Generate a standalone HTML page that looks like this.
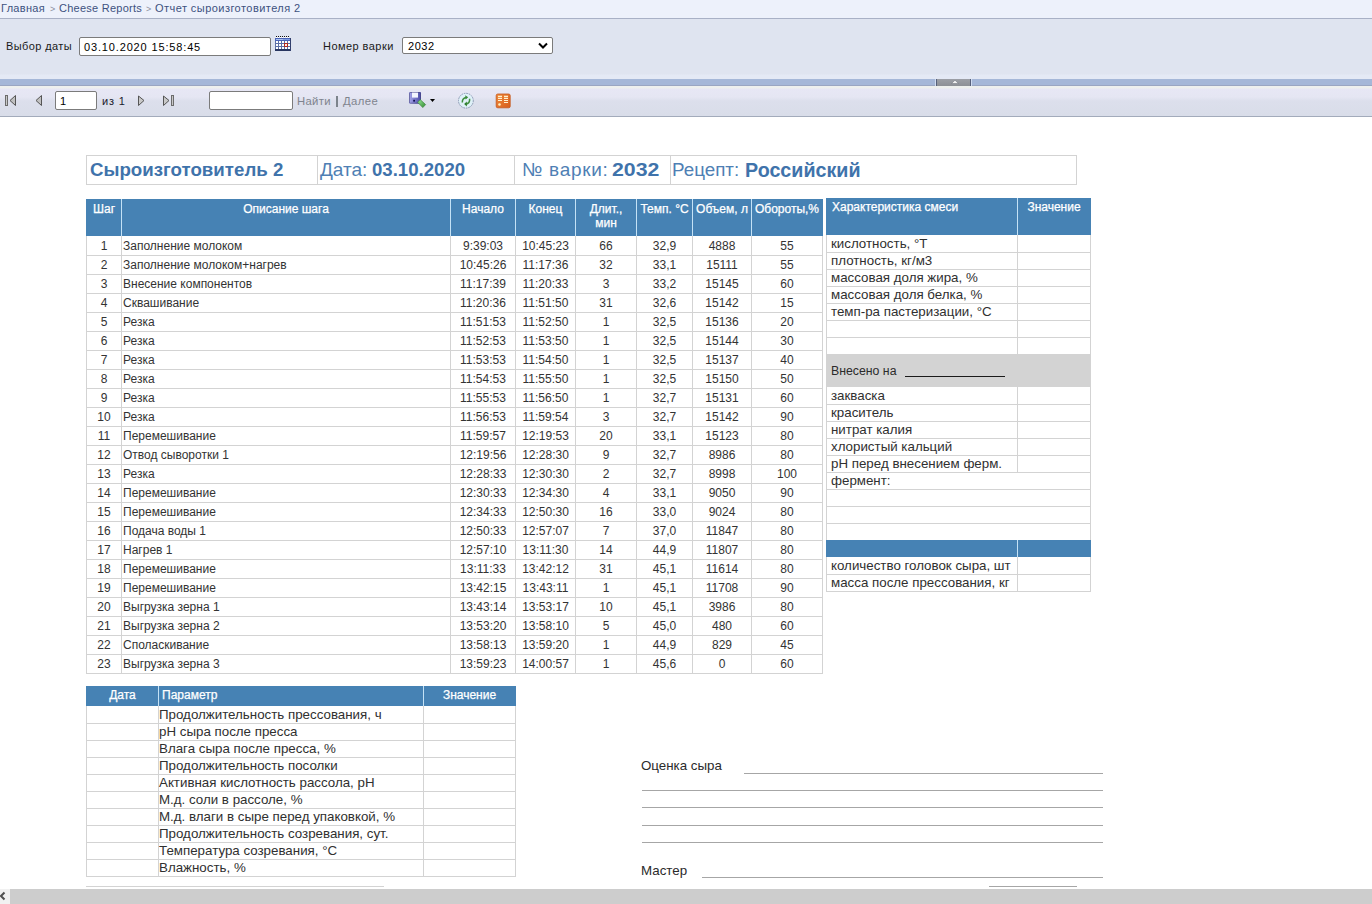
<!DOCTYPE html>
<html><head><meta charset="utf-8"><title>Отчет сыроизготовителя 2</title><style>
*{margin:0;padding:0;box-sizing:border-box}
html,body{width:1372px;height:904px;overflow:hidden;background:#fff;font-family:"Liberation Sans",sans-serif}
body{position:relative}
.a{position:absolute}
.t{position:absolute;white-space:nowrap}
#crumb{left:0;top:0;width:1372px;height:19px;background:#edf1fb;border-bottom:1px solid #a9b1c6}
#params{left:0;top:19px;width:1372px;height:60px;background:linear-gradient(#dfe4f0 0,#dfe4f0 55px,#e4e9f5 56px,#e4e9f5 60px)}
.lbl{font-size:11px;line-height:13px;color:#1a1a1a}
.inp{position:absolute;background:#fff;border:1px solid #7b7b7b;border-radius:2px;font-size:12px;color:#000;white-space:nowrap;padding-left:4px}
#split{left:0;top:79px;width:1372px;height:7px;background:#a5b7d8;border-bottom:1px solid #9aa6c2}
#tb{left:0;top:86px;width:1372px;height:31px;background:linear-gradient(#eef0ee 0px,#eef0ee 2px,#e7e7f5 3px,#e5e6f3 11px,#dcdfec 15px,#d9dde9 29px);border-bottom:1px solid #a3abbb}
.hl{position:absolute;height:1px;background:#d3d3d3}
.vl{position:absolute;width:1px;background:#d3d3d3}
.blue{position:absolute;background:#4682b4}
.hv{position:absolute;width:1px;background:#c4e2f6}
.wt{-webkit-text-stroke:0.25px #fff}
.c{position:absolute;white-space:nowrap;font-size:12px;color:#333;line-height:19px;height:19px;padding-top:1px}
.h{position:absolute;white-space:nowrap;font-size:12px;color:#fff;line-height:13.5px;text-align:center;-webkit-text-stroke:0.25px #fff}
.r{position:absolute;white-space:nowrap;font-size:13.33px;color:#303030;line-height:17px;height:17px}
.sig{position:absolute;height:1px;background:#a6a6a6}
</style></head><body>
<div id="crumb" class="a"><span class="t" style="left:1px;top:2px;font-size:11px;letter-spacing:0.3px;color:#3d5180">Главная</span><span class="t" style="left:50px;top:4px;font-size:9px;color:#8a8f9c">&gt;</span><span class="t" style="left:59px;top:2px;font-size:11px;letter-spacing:0.25px;color:#3d5180">Cheese Reports</span><span class="t" style="left:146px;top:4px;font-size:9px;color:#8a8f9c">&gt;</span><span class="t" style="left:155px;top:2px;font-size:11px;letter-spacing:0.45px;color:#3d5180">Отчет сыроизготовителя 2</span></div>
<div id="params" class="a"><div class="t lbl" style="left:6px;top:21px;letter-spacing:0.39px">Выбор даты</div><div class="inp" style="left:79px;top:18px;width:192px;height:19px;line-height:19px;letter-spacing:0.85px;font-size:11px">03.10.2020 15:58:45</div><svg class="a" style="left:275px;top:17px" width="16" height="16" viewBox="0 0 16 16" shape-rendering="crispEdges"><rect x="0" y="2" width="16" height="13" fill="#5b6ea6"/><rect x="0" y="2" width="16" height="3" fill="#4a64b8"/><rect x="1" y="3" width="7" height="1" fill="#a8c0f0"/><rect x="8" y="3" width="7" height="1" fill="#7f9ce0"/><rect x="0" y="13" width="16" height="2" fill="#283560"/><rect x="15" y="2" width="1" height="13" fill="#33406e"/><rect x="1" y="0" width="1" height="1" fill="#111"/><rect x="1" y="1" width="1" height="1" fill="#fff"/><rect x="3" y="0" width="1" height="1" fill="#111"/><rect x="3" y="1" width="1" height="1" fill="#fff"/><rect x="5" y="0" width="1" height="1" fill="#111"/><rect x="5" y="1" width="1" height="1" fill="#fff"/><rect x="7" y="0" width="1" height="1" fill="#111"/><rect x="7" y="1" width="1" height="1" fill="#fff"/><rect x="9" y="0" width="1" height="1" fill="#111"/><rect x="9" y="1" width="1" height="1" fill="#fff"/><rect x="11" y="0" width="1" height="1" fill="#111"/><rect x="11" y="1" width="1" height="1" fill="#fff"/><rect x="13" y="0" width="1" height="1" fill="#111"/><rect x="13" y="1" width="1" height="1" fill="#fff"/><rect x="1" y="5" width="2" height="2" fill="#fff"/><rect x="1" y="8" width="2" height="2" fill="#fff"/><rect x="1" y="11" width="2" height="2" fill="#fff"/><rect x="4" y="5" width="2" height="2" fill="#fff"/><rect x="4" y="8" width="2" height="2" fill="#fff"/><rect x="4" y="11" width="2" height="2" fill="#fff"/><rect x="7" y="5" width="2" height="2" fill="#fff"/><rect x="7" y="8" width="2" height="2" fill="#fff"/><rect x="7" y="11" width="2" height="2" fill="#fff"/><rect x="10" y="5" width="2" height="2" fill="#fff"/><rect x="10" y="8" width="2" height="2" fill="#fff"/><rect x="10" y="11" width="2" height="2" fill="#fff"/><rect x="13" y="5" width="2" height="2" fill="#fff"/><rect x="13" y="8" width="2" height="2" fill="#fff"/><rect x="13" y="11" width="2" height="2" fill="#fff"/><rect x="9" y="7" width="4" height="4" fill="#b02a20"/><rect x="10" y="8" width="2" height="2" fill="#fde8e0"/></svg><div class="t lbl" style="left:323px;top:21px;letter-spacing:0.45px">Номер варки</div><div class="inp" style="left:402px;top:18px;width:151px;height:17px;line-height:17px;padding-left:5px;font-size:11px;letter-spacing:0.55px">2032<svg class="a" style="left:135px;top:4px" width="10" height="7" viewBox="0 0 10 7"><path d="M1 1.5L5 5.5L9 1.5" stroke="#000" stroke-width="2" fill="none"/></svg></div></div>
<div id="split" class="a"><div class="a" style="left:935px;top:0;width:1px;height:7px;background:#d0dcf0"></div><div class="a" style="left:936px;top:0;width:35px;height:7px;background:linear-gradient(#9c9fa6,#8d9096);border-left:1px solid #56607a;border-right:1px solid #56607a"></div><div class="a" style="left:971px;top:0;width:1px;height:7px;background:#d0dcf0"></div><svg class="a" style="left:950px;top:0px" width="10" height="6" viewBox="0 0 10 6"><path d="M1.5 4.5L5 1.2L8.5 4.5Z" fill="#f2f2f2" stroke="#6a6e78" stroke-width="0.5"/></svg></div>
<div id="tb" class="a"><svg class="a" style="left:0;top:0" width="200" height="30" viewBox="0 0 200 30"><rect x="5.5" y="9.5" width="2" height="10" fill="#c8c8c8" stroke="#6c6c6c"/><path d="M15.5 9.5V19.5L10 14.5Z" fill="#c0c0c0" stroke="#555" stroke-linejoin="round"/><path d="M41.5 9.5V19.5L36 14.5Z" fill="#c0c0c0" stroke="#555" stroke-linejoin="round"/><path d="M138.5 10V19.5L144 14.5Z" fill="#c8c8c8" stroke="#555" stroke-linejoin="round"/><path d="M163.5 10V19.5L169 14.5Z" fill="#c8c8c8" stroke="#555" stroke-linejoin="round"/><rect x="171.5" y="9.5" width="2" height="10" fill="#c8c8c8" stroke="#6c6c6c"/></svg><div class="inp" style="left:55px;top:5px;width:42px;height:19px;line-height:19px;font-size:11px">1</div><div class="t" style="left:102px;top:9px;font-size:11px;letter-spacing:0.8px;color:#1a1a2e">из 1</div><div class="inp" style="left:209px;top:5px;width:84px;height:19px"></div><div class="t" style="left:297px;top:9px;font-size:11.3px;color:#7f848e;letter-spacing:0.3px">Найти</div><div class="a" style="left:336px;top:10px;width:2px;height:11px;background:#7d848c"></div><div class="t" style="left:343px;top:9px;font-size:11.3px;color:#7f848e;letter-spacing:0.4px">Далее</div><svg class="a" style="left:405px;top:4px" width="34" height="22" viewBox="0 0 34 22"><defs><linearGradient id="fl" x1="0" x2="1"><stop offset="0" stop-color="#a8a8ec"/><stop offset="1" stop-color="#4a4aa6"/></linearGradient><linearGradient id="ar" x1="0" y1="0" x2="1" y2="1"><stop offset="0" stop-color="#9ce89c"/><stop offset="1" stop-color="#2e8a2e"/></linearGradient></defs><rect x="4" y="2" width="12" height="11.7" rx="1" fill="url(#fl)"/><rect x="4.5" y="2.5" width="11" height="10.7" rx="0.8" fill="none" stroke="#45457a" stroke-width="0.8" opacity="0.7"/><rect x="7" y="2.6" width="6" height="5" fill="#f4f6ff"/><rect x="8.2" y="9.8" width="1.8" height="1.8" fill="#101050"/><path d="M12.6 12.2L15.2 9.6L20.6 14.6L17.8 17.6Z" fill="url(#ar)" stroke="#2f7a2f" stroke-width="0.6"/><path d="M25 9H30L27.5 12Z" fill="#000"/></svg><svg class="a" style="left:457px;top:6px" width="18" height="18" viewBox="0 0 18 18"><circle cx="8.9" cy="8.7" r="7.4" fill="#dff1f8" stroke="#7c8aa8" stroke-width="0.9" stroke-dasharray="1.6 0.9"/><path d="M5.3 10.5C5.2 7.6 7 5.8 9.5 5.5" stroke="#3f8f3f" stroke-width="1.5" fill="none"/><path d="M8.2 3.2L11.2 5.3L8.6 7.6Z" fill="#3a8a3a"/><path d="M12.6 6.8C12.9 9.8 11.2 11.8 8.8 12.2" stroke="#3f8f3f" stroke-width="1.5" fill="none"/><path d="M9.8 9.6L7.1 12.1L9.9 14.6Z" fill="#2f7f2f"/></svg><svg class="a" style="left:495px;top:7px" width="17" height="16" viewBox="0 0 17 16"><defs><linearGradient id="og" x1="0" y1="0" x2="1" y2="1"><stop offset="0" stop-color="#f08a3a"/><stop offset="1" stop-color="#d85e1c"/></linearGradient></defs><rect x="1.2" y="1" width="14" height="13.8" rx="1.6" fill="url(#og)" stroke="#c4551a" stroke-width="0.8"/><path d="M3 3.4H7M3 5.4H7M3 7.5H7M9 3.4H13M9 5.4H13M9 7.5H13M9 9.5H13" stroke="#fff2d0" stroke-width="1.1"/><circle cx="4.5" cy="11.5" r="1.3" fill="#fff2c0"/></svg></div>
<div class="a" style="left:86px;top:155px;width:991px;height:30px;border:1px solid #d3d3d3"></div><div class="vl" style="left:317px;top:155px;height:30px"></div><div class="vl" style="left:514px;top:155px;height:30px"></div><div class="vl" style="left:670px;top:155px;height:30px"></div><div class="t" style="left:90px;top:159px;font-size:18.7px;line-height:22px;font-weight:bold;letter-spacing:0px;color:#3f73ab">Сыроизготовитель 2</div><div class="t" style="left:320px;top:159px;font-size:19px;line-height:22px;font-weight:normal;letter-spacing:0px;color:#4f7fb4">Дата:</div><div class="t" style="left:372px;top:159px;font-size:18.6px;line-height:22px;font-weight:bold;letter-spacing:0px;color:#3f73ab">03.10.2020</div><div class="t" style="left:522px;top:159px;font-size:19px;line-height:22px;font-weight:normal;letter-spacing:0.7px;color:#4f7fb4">№ варки:</div><div class="t" style="left:612px;top:159px;font-size:19px;line-height:22px;font-weight:bold;letter-spacing:0px;color:#3f73ab;transform:scaleX(1.12);transform-origin:0 0">2032</div><div class="t" style="left:672px;top:159px;font-size:18.8px;line-height:22px;font-weight:normal;letter-spacing:0px;color:#4f7fb4">Рецепт:</div><div class="t" style="left:745px;top:159px;font-size:19.7px;line-height:22px;font-weight:bold;letter-spacing:0px;color:#3f73ab">Российский</div><div class="blue" style="left:86px;top:199px;width:737px;height:37px"></div><div class="hv" style="left:121px;top:199px;height:37px"></div><div class="hv" style="left:450px;top:199px;height:37px"></div><div class="hv" style="left:515px;top:199px;height:37px"></div><div class="hv" style="left:575px;top:199px;height:37px"></div><div class="hv" style="left:636px;top:199px;height:37px"></div><div class="hv" style="left:692px;top:199px;height:37px"></div><div class="hv" style="left:751px;top:199px;height:37px"></div><div class="vl" style="left:86px;top:236px;height:438px"></div><div class="vl" style="left:121px;top:236px;height:438px"></div><div class="vl" style="left:450px;top:236px;height:438px"></div><div class="vl" style="left:515px;top:236px;height:438px"></div><div class="vl" style="left:575px;top:236px;height:438px"></div><div class="vl" style="left:636px;top:236px;height:438px"></div><div class="vl" style="left:692px;top:236px;height:438px"></div><div class="vl" style="left:751px;top:236px;height:438px"></div><div class="vl" style="left:822px;top:236px;height:438px"></div><div class="hl" style="left:86px;top:255px;width:737px"></div><div class="hl" style="left:86px;top:274px;width:737px"></div><div class="hl" style="left:86px;top:293px;width:737px"></div><div class="hl" style="left:86px;top:312px;width:737px"></div><div class="hl" style="left:86px;top:331px;width:737px"></div><div class="hl" style="left:86px;top:350px;width:737px"></div><div class="hl" style="left:86px;top:369px;width:737px"></div><div class="hl" style="left:86px;top:388px;width:737px"></div><div class="hl" style="left:86px;top:407px;width:737px"></div><div class="hl" style="left:86px;top:426px;width:737px"></div><div class="hl" style="left:86px;top:445px;width:737px"></div><div class="hl" style="left:86px;top:464px;width:737px"></div><div class="hl" style="left:86px;top:483px;width:737px"></div><div class="hl" style="left:86px;top:502px;width:737px"></div><div class="hl" style="left:86px;top:521px;width:737px"></div><div class="hl" style="left:86px;top:540px;width:737px"></div><div class="hl" style="left:86px;top:559px;width:737px"></div><div class="hl" style="left:86px;top:578px;width:737px"></div><div class="hl" style="left:86px;top:597px;width:737px"></div><div class="hl" style="left:86px;top:616px;width:737px"></div><div class="hl" style="left:86px;top:635px;width:737px"></div><div class="hl" style="left:86px;top:654px;width:737px"></div><div class="hl" style="left:86px;top:673px;width:737px"></div><div class="h" style="left:87px;top:203px;width:34px">Шаг</div><div class="h" style="left:122px;top:203px;width:328px">Описание шага</div><div class="h" style="left:451px;top:203px;width:64px">Начало</div><div class="h" style="left:516px;top:203px;width:59px">Конец</div><div class="h" style="left:576px;top:203px;width:60px">Длит.,<br>мин</div><div class="h" style="left:637px;top:203px;width:55px">Темп. °C</div><div class="h" style="left:693px;top:203px;width:58px">Объем, л</div><div class="h" style="left:752px;top:203px;width:70px">Обороты,%</div><div class="c" style="left:87px;top:236px;width:34px;text-align:center">1</div><div class="c" style="left:123px;top:236px">Заполнение молоком</div><div class="c" style="left:451px;top:236px;width:64px;text-align:center">9:39:03</div><div class="c" style="left:516px;top:236px;width:59px;text-align:center">10:45:23</div><div class="c" style="left:576px;top:236px;width:60px;text-align:center">66</div><div class="c" style="left:637px;top:236px;width:55px;text-align:center">32,9</div><div class="c" style="left:693px;top:236px;width:58px;text-align:center">4888</div><div class="c" style="left:752px;top:236px;width:70px;text-align:center">55</div><div class="c" style="left:87px;top:255px;width:34px;text-align:center">2</div><div class="c" style="left:123px;top:255px">Заполнение молоком+нагрев</div><div class="c" style="left:451px;top:255px;width:64px;text-align:center">10:45:26</div><div class="c" style="left:516px;top:255px;width:59px;text-align:center">11:17:36</div><div class="c" style="left:576px;top:255px;width:60px;text-align:center">32</div><div class="c" style="left:637px;top:255px;width:55px;text-align:center">33,1</div><div class="c" style="left:693px;top:255px;width:58px;text-align:center">15111</div><div class="c" style="left:752px;top:255px;width:70px;text-align:center">55</div><div class="c" style="left:87px;top:274px;width:34px;text-align:center">3</div><div class="c" style="left:123px;top:274px">Внесение компонентов</div><div class="c" style="left:451px;top:274px;width:64px;text-align:center">11:17:39</div><div class="c" style="left:516px;top:274px;width:59px;text-align:center">11:20:33</div><div class="c" style="left:576px;top:274px;width:60px;text-align:center">3</div><div class="c" style="left:637px;top:274px;width:55px;text-align:center">33,2</div><div class="c" style="left:693px;top:274px;width:58px;text-align:center">15145</div><div class="c" style="left:752px;top:274px;width:70px;text-align:center">60</div><div class="c" style="left:87px;top:293px;width:34px;text-align:center">4</div><div class="c" style="left:123px;top:293px">Сквашивание</div><div class="c" style="left:451px;top:293px;width:64px;text-align:center">11:20:36</div><div class="c" style="left:516px;top:293px;width:59px;text-align:center">11:51:50</div><div class="c" style="left:576px;top:293px;width:60px;text-align:center">31</div><div class="c" style="left:637px;top:293px;width:55px;text-align:center">32,6</div><div class="c" style="left:693px;top:293px;width:58px;text-align:center">15142</div><div class="c" style="left:752px;top:293px;width:70px;text-align:center">15</div><div class="c" style="left:87px;top:312px;width:34px;text-align:center">5</div><div class="c" style="left:123px;top:312px">Резка</div><div class="c" style="left:451px;top:312px;width:64px;text-align:center">11:51:53</div><div class="c" style="left:516px;top:312px;width:59px;text-align:center">11:52:50</div><div class="c" style="left:576px;top:312px;width:60px;text-align:center">1</div><div class="c" style="left:637px;top:312px;width:55px;text-align:center">32,5</div><div class="c" style="left:693px;top:312px;width:58px;text-align:center">15136</div><div class="c" style="left:752px;top:312px;width:70px;text-align:center">20</div><div class="c" style="left:87px;top:331px;width:34px;text-align:center">6</div><div class="c" style="left:123px;top:331px">Резка</div><div class="c" style="left:451px;top:331px;width:64px;text-align:center">11:52:53</div><div class="c" style="left:516px;top:331px;width:59px;text-align:center">11:53:50</div><div class="c" style="left:576px;top:331px;width:60px;text-align:center">1</div><div class="c" style="left:637px;top:331px;width:55px;text-align:center">32,5</div><div class="c" style="left:693px;top:331px;width:58px;text-align:center">15144</div><div class="c" style="left:752px;top:331px;width:70px;text-align:center">30</div><div class="c" style="left:87px;top:350px;width:34px;text-align:center">7</div><div class="c" style="left:123px;top:350px">Резка</div><div class="c" style="left:451px;top:350px;width:64px;text-align:center">11:53:53</div><div class="c" style="left:516px;top:350px;width:59px;text-align:center">11:54:50</div><div class="c" style="left:576px;top:350px;width:60px;text-align:center">1</div><div class="c" style="left:637px;top:350px;width:55px;text-align:center">32,5</div><div class="c" style="left:693px;top:350px;width:58px;text-align:center">15137</div><div class="c" style="left:752px;top:350px;width:70px;text-align:center">40</div><div class="c" style="left:87px;top:369px;width:34px;text-align:center">8</div><div class="c" style="left:123px;top:369px">Резка</div><div class="c" style="left:451px;top:369px;width:64px;text-align:center">11:54:53</div><div class="c" style="left:516px;top:369px;width:59px;text-align:center">11:55:50</div><div class="c" style="left:576px;top:369px;width:60px;text-align:center">1</div><div class="c" style="left:637px;top:369px;width:55px;text-align:center">32,5</div><div class="c" style="left:693px;top:369px;width:58px;text-align:center">15150</div><div class="c" style="left:752px;top:369px;width:70px;text-align:center">50</div><div class="c" style="left:87px;top:388px;width:34px;text-align:center">9</div><div class="c" style="left:123px;top:388px">Резка</div><div class="c" style="left:451px;top:388px;width:64px;text-align:center">11:55:53</div><div class="c" style="left:516px;top:388px;width:59px;text-align:center">11:56:50</div><div class="c" style="left:576px;top:388px;width:60px;text-align:center">1</div><div class="c" style="left:637px;top:388px;width:55px;text-align:center">32,7</div><div class="c" style="left:693px;top:388px;width:58px;text-align:center">15131</div><div class="c" style="left:752px;top:388px;width:70px;text-align:center">60</div><div class="c" style="left:87px;top:407px;width:34px;text-align:center">10</div><div class="c" style="left:123px;top:407px">Резка</div><div class="c" style="left:451px;top:407px;width:64px;text-align:center">11:56:53</div><div class="c" style="left:516px;top:407px;width:59px;text-align:center">11:59:54</div><div class="c" style="left:576px;top:407px;width:60px;text-align:center">3</div><div class="c" style="left:637px;top:407px;width:55px;text-align:center">32,7</div><div class="c" style="left:693px;top:407px;width:58px;text-align:center">15142</div><div class="c" style="left:752px;top:407px;width:70px;text-align:center">90</div><div class="c" style="left:87px;top:426px;width:34px;text-align:center">11</div><div class="c" style="left:123px;top:426px">Перемешивание</div><div class="c" style="left:451px;top:426px;width:64px;text-align:center">11:59:57</div><div class="c" style="left:516px;top:426px;width:59px;text-align:center">12:19:53</div><div class="c" style="left:576px;top:426px;width:60px;text-align:center">20</div><div class="c" style="left:637px;top:426px;width:55px;text-align:center">33,1</div><div class="c" style="left:693px;top:426px;width:58px;text-align:center">15123</div><div class="c" style="left:752px;top:426px;width:70px;text-align:center">80</div><div class="c" style="left:87px;top:445px;width:34px;text-align:center">12</div><div class="c" style="left:123px;top:445px">Отвод сыворотки 1</div><div class="c" style="left:451px;top:445px;width:64px;text-align:center">12:19:56</div><div class="c" style="left:516px;top:445px;width:59px;text-align:center">12:28:30</div><div class="c" style="left:576px;top:445px;width:60px;text-align:center">9</div><div class="c" style="left:637px;top:445px;width:55px;text-align:center">32,7</div><div class="c" style="left:693px;top:445px;width:58px;text-align:center">8986</div><div class="c" style="left:752px;top:445px;width:70px;text-align:center">80</div><div class="c" style="left:87px;top:464px;width:34px;text-align:center">13</div><div class="c" style="left:123px;top:464px">Резка</div><div class="c" style="left:451px;top:464px;width:64px;text-align:center">12:28:33</div><div class="c" style="left:516px;top:464px;width:59px;text-align:center">12:30:30</div><div class="c" style="left:576px;top:464px;width:60px;text-align:center">2</div><div class="c" style="left:637px;top:464px;width:55px;text-align:center">32,7</div><div class="c" style="left:693px;top:464px;width:58px;text-align:center">8998</div><div class="c" style="left:752px;top:464px;width:70px;text-align:center">100</div><div class="c" style="left:87px;top:483px;width:34px;text-align:center">14</div><div class="c" style="left:123px;top:483px">Перемешивание</div><div class="c" style="left:451px;top:483px;width:64px;text-align:center">12:30:33</div><div class="c" style="left:516px;top:483px;width:59px;text-align:center">12:34:30</div><div class="c" style="left:576px;top:483px;width:60px;text-align:center">4</div><div class="c" style="left:637px;top:483px;width:55px;text-align:center">33,1</div><div class="c" style="left:693px;top:483px;width:58px;text-align:center">9050</div><div class="c" style="left:752px;top:483px;width:70px;text-align:center">90</div><div class="c" style="left:87px;top:502px;width:34px;text-align:center">15</div><div class="c" style="left:123px;top:502px">Перемешивание</div><div class="c" style="left:451px;top:502px;width:64px;text-align:center">12:34:33</div><div class="c" style="left:516px;top:502px;width:59px;text-align:center">12:50:30</div><div class="c" style="left:576px;top:502px;width:60px;text-align:center">16</div><div class="c" style="left:637px;top:502px;width:55px;text-align:center">33,0</div><div class="c" style="left:693px;top:502px;width:58px;text-align:center">9024</div><div class="c" style="left:752px;top:502px;width:70px;text-align:center">80</div><div class="c" style="left:87px;top:521px;width:34px;text-align:center">16</div><div class="c" style="left:123px;top:521px">Подача воды 1</div><div class="c" style="left:451px;top:521px;width:64px;text-align:center">12:50:33</div><div class="c" style="left:516px;top:521px;width:59px;text-align:center">12:57:07</div><div class="c" style="left:576px;top:521px;width:60px;text-align:center">7</div><div class="c" style="left:637px;top:521px;width:55px;text-align:center">37,0</div><div class="c" style="left:693px;top:521px;width:58px;text-align:center">11847</div><div class="c" style="left:752px;top:521px;width:70px;text-align:center">80</div><div class="c" style="left:87px;top:540px;width:34px;text-align:center">17</div><div class="c" style="left:123px;top:540px">Нагрев 1</div><div class="c" style="left:451px;top:540px;width:64px;text-align:center">12:57:10</div><div class="c" style="left:516px;top:540px;width:59px;text-align:center">13:11:30</div><div class="c" style="left:576px;top:540px;width:60px;text-align:center">14</div><div class="c" style="left:637px;top:540px;width:55px;text-align:center">44,9</div><div class="c" style="left:693px;top:540px;width:58px;text-align:center">11807</div><div class="c" style="left:752px;top:540px;width:70px;text-align:center">80</div><div class="c" style="left:87px;top:559px;width:34px;text-align:center">18</div><div class="c" style="left:123px;top:559px">Перемешивание</div><div class="c" style="left:451px;top:559px;width:64px;text-align:center">13:11:33</div><div class="c" style="left:516px;top:559px;width:59px;text-align:center">13:42:12</div><div class="c" style="left:576px;top:559px;width:60px;text-align:center">31</div><div class="c" style="left:637px;top:559px;width:55px;text-align:center">45,1</div><div class="c" style="left:693px;top:559px;width:58px;text-align:center">11614</div><div class="c" style="left:752px;top:559px;width:70px;text-align:center">80</div><div class="c" style="left:87px;top:578px;width:34px;text-align:center">19</div><div class="c" style="left:123px;top:578px">Перемешивание</div><div class="c" style="left:451px;top:578px;width:64px;text-align:center">13:42:15</div><div class="c" style="left:516px;top:578px;width:59px;text-align:center">13:43:11</div><div class="c" style="left:576px;top:578px;width:60px;text-align:center">1</div><div class="c" style="left:637px;top:578px;width:55px;text-align:center">45,1</div><div class="c" style="left:693px;top:578px;width:58px;text-align:center">11708</div><div class="c" style="left:752px;top:578px;width:70px;text-align:center">90</div><div class="c" style="left:87px;top:597px;width:34px;text-align:center">20</div><div class="c" style="left:123px;top:597px">Выгрузка зерна 1</div><div class="c" style="left:451px;top:597px;width:64px;text-align:center">13:43:14</div><div class="c" style="left:516px;top:597px;width:59px;text-align:center">13:53:17</div><div class="c" style="left:576px;top:597px;width:60px;text-align:center">10</div><div class="c" style="left:637px;top:597px;width:55px;text-align:center">45,1</div><div class="c" style="left:693px;top:597px;width:58px;text-align:center">3986</div><div class="c" style="left:752px;top:597px;width:70px;text-align:center">80</div><div class="c" style="left:87px;top:616px;width:34px;text-align:center">21</div><div class="c" style="left:123px;top:616px">Выгрузка зерна 2</div><div class="c" style="left:451px;top:616px;width:64px;text-align:center">13:53:20</div><div class="c" style="left:516px;top:616px;width:59px;text-align:center">13:58:10</div><div class="c" style="left:576px;top:616px;width:60px;text-align:center">5</div><div class="c" style="left:637px;top:616px;width:55px;text-align:center">45,0</div><div class="c" style="left:693px;top:616px;width:58px;text-align:center">480</div><div class="c" style="left:752px;top:616px;width:70px;text-align:center">60</div><div class="c" style="left:87px;top:635px;width:34px;text-align:center">22</div><div class="c" style="left:123px;top:635px">Споласкивание</div><div class="c" style="left:451px;top:635px;width:64px;text-align:center">13:58:13</div><div class="c" style="left:516px;top:635px;width:59px;text-align:center">13:59:20</div><div class="c" style="left:576px;top:635px;width:60px;text-align:center">1</div><div class="c" style="left:637px;top:635px;width:55px;text-align:center">44,9</div><div class="c" style="left:693px;top:635px;width:58px;text-align:center">829</div><div class="c" style="left:752px;top:635px;width:70px;text-align:center">45</div><div class="c" style="left:87px;top:654px;width:34px;text-align:center">23</div><div class="c" style="left:123px;top:654px">Выгрузка зерна 3</div><div class="c" style="left:451px;top:654px;width:64px;text-align:center">13:59:23</div><div class="c" style="left:516px;top:654px;width:59px;text-align:center">14:00:57</div><div class="c" style="left:576px;top:654px;width:60px;text-align:center">1</div><div class="c" style="left:637px;top:654px;width:55px;text-align:center">45,6</div><div class="c" style="left:693px;top:654px;width:58px;text-align:center">0</div><div class="c" style="left:752px;top:654px;width:70px;text-align:center">60</div><div class="blue" style="left:826px;top:198px;width:265px;height:37px"></div><div class="hv" style="left:1017px;top:198px;height:37px"></div><div class="t wt" style="left:832px;top:200px;font-size:12px;color:#fff;line-height:14px">Характеристика смеси</div><div class="t wt" style="left:1018px;top:200px;width:72px;text-align:center;font-size:12px;color:#fff;line-height:14px">Значение</div><div class="hl" style="left:826px;top:252px;width:265px"></div><div class="hl" style="left:826px;top:269px;width:265px"></div><div class="hl" style="left:826px;top:286px;width:265px"></div><div class="hl" style="left:826px;top:303px;width:265px"></div><div class="hl" style="left:826px;top:320px;width:265px"></div><div class="hl" style="left:826px;top:337px;width:265px"></div><div class="vl" style="left:826px;top:235px;height:119px"></div><div class="vl" style="left:1090px;top:235px;height:119px"></div><div class="vl" style="left:1017px;top:235px;height:119px"></div><div class="r" style="left:831px;top:235px">кислотность, °T</div><div class="r" style="left:831px;top:252px">плотность, кг/м3</div><div class="r" style="left:831px;top:269px">массовая доля жира, %</div><div class="r" style="left:831px;top:286px">массовая доля белка, %</div><div class="r" style="left:831px;top:303px">темп-ра пастеризации, °C</div><div class="a" style="left:826px;top:354px;width:265px;height:33px;background:#d3d3d3"></div><div class="t" style="left:831px;top:363px;font-size:12.3px;line-height:17px;color:#2b2b2b">Внесено на</div><div class="a" style="left:905px;top:376px;width:100px;height:1px;background:#1a1a1a"></div><div class="hl" style="left:826px;top:404px;width:265px"></div><div class="hl" style="left:826px;top:421px;width:265px"></div><div class="hl" style="left:826px;top:438px;width:265px"></div><div class="hl" style="left:826px;top:455px;width:265px"></div><div class="hl" style="left:826px;top:472px;width:265px"></div><div class="hl" style="left:826px;top:489px;width:265px"></div><div class="hl" style="left:826px;top:506px;width:265px"></div><div class="hl" style="left:826px;top:523px;width:265px"></div><div class="hl" style="left:826px;top:540px;width:265px"></div><div class="vl" style="left:826px;top:387px;height:153px"></div><div class="vl" style="left:1090px;top:387px;height:153px"></div><div class="vl" style="left:1017px;top:387px;height:85px"></div><div class="r" style="left:831px;top:387px">закваска</div><div class="r" style="left:831px;top:404px">краситель</div><div class="r" style="left:831px;top:421px">нитрат калия</div><div class="r" style="left:831px;top:438px">хлористый кальций</div><div class="r" style="left:831px;top:455px">pH перед внесением ферм.</div><div class="r" style="left:831px;top:472px">фермент:</div><div class="blue" style="left:826px;top:540px;width:265px;height:17px"></div><div class="hv" style="left:1017px;top:540px;height:17px"></div><div class="hl" style="left:826px;top:574px;width:265px"></div><div class="hl" style="left:826px;top:591px;width:265px"></div><div class="vl" style="left:826px;top:557px;height:34px"></div><div class="vl" style="left:1017px;top:557px;height:34px"></div><div class="vl" style="left:1090px;top:557px;height:34px"></div><div class="r" style="left:831px;top:557px">количество головок сыра, шт</div><div class="r" style="left:831px;top:574px">масса после прессования, кг</div><div class="blue" style="left:86px;top:686px;width:430px;height:20px"></div><div class="hv" style="left:158px;top:686px;height:20px"></div><div class="hv" style="left:423px;top:686px;height:20px"></div><div class="t wt" style="left:87px;top:688px;width:71px;text-align:center;font-size:12px;color:#fff;line-height:14px">Дата</div><div class="t wt" style="left:162px;top:688px;font-size:12px;color:#fff;line-height:14px">Параметр</div><div class="t wt" style="left:424px;top:688px;width:91px;text-align:center;font-size:12px;color:#fff;line-height:14px">Значение</div><div class="vl" style="left:86px;top:706px;height:170px"></div><div class="vl" style="left:158px;top:706px;height:170px"></div><div class="vl" style="left:423px;top:706px;height:170px"></div><div class="vl" style="left:515px;top:706px;height:170px"></div><div class="hl" style="left:86px;top:723px;width:430px"></div><div class="hl" style="left:86px;top:740px;width:430px"></div><div class="hl" style="left:86px;top:757px;width:430px"></div><div class="hl" style="left:86px;top:774px;width:430px"></div><div class="hl" style="left:86px;top:791px;width:430px"></div><div class="hl" style="left:86px;top:808px;width:430px"></div><div class="hl" style="left:86px;top:825px;width:430px"></div><div class="hl" style="left:86px;top:842px;width:430px"></div><div class="hl" style="left:86px;top:859px;width:430px"></div><div class="hl" style="left:86px;top:876px;width:430px"></div><div class="r" style="left:159px;top:706px">Продолжительность прессования, ч</div><div class="r" style="left:159px;top:723px">pH сыра после пресса</div><div class="r" style="left:159px;top:740px">Влага сыра после пресса, %</div><div class="r" style="left:159px;top:757px">Продолжительность посолки</div><div class="r" style="left:159px;top:774px">Активная кислотность рассола, pH</div><div class="r" style="left:159px;top:791px">М.д. соли в рассоле, %</div><div class="r" style="left:159px;top:808px">М.д. влаги в сыре перед упаковкой, %</div><div class="r" style="left:159px;top:825px">Продолжительность созревания, сут.</div><div class="r" style="left:159px;top:842px">Температура созревания, °C</div><div class="r" style="left:159px;top:859px">Влажность, %</div><div class="hl" style="left:86px;top:886px;width:298px"></div><div class="t" style="left:641px;top:757px;font-size:13.33px;line-height:17px;color:#2b2b2b">Оценка сыра</div><div class="sig" style="left:744px;top:773px;width:359px"></div><div class="sig" style="left:642px;top:790px;width:461px"></div><div class="sig" style="left:642px;top:807px;width:461px"></div><div class="sig" style="left:642px;top:825px;width:461px"></div><div class="sig" style="left:642px;top:842px;width:461px"></div><div class="t" style="left:641px;top:862px;font-size:13.33px;line-height:17px;color:#2b2b2b">Мастер</div><div class="sig" style="left:702px;top:877px;width:401px"></div><div class="sig" style="left:989px;top:886px;width:88px"></div><div class="a" style="left:0;top:889px;width:1372px;height:15px;background:#cdcdcd"></div><div class="a" style="left:0;top:889px;width:10px;height:15px;background:#f1f1f1"></div><svg class="a" style="left:0;top:891px" width="10" height="10" viewBox="0 0 10 10"><path d="M4.5 1.5L1 5L4.5 8.5" stroke="#505050" stroke-width="2" fill="none"/></svg></body></html>
